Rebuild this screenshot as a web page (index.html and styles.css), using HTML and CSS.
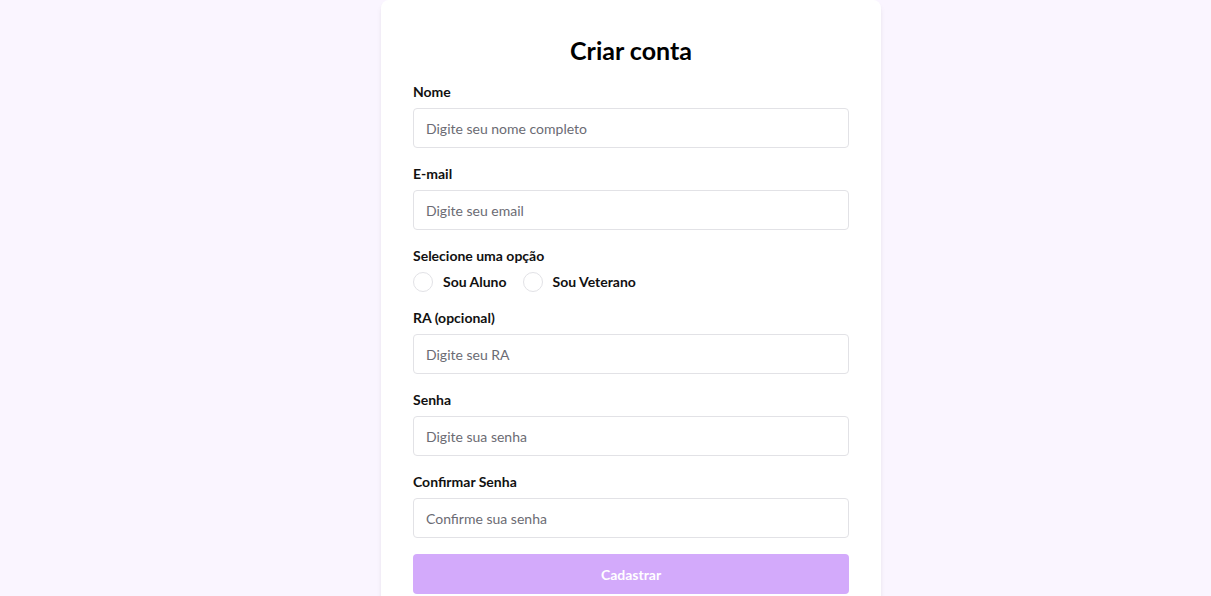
FILE: index.html
```html
<!DOCTYPE html>
<html lang="pt-BR">
<head>
<meta charset="utf-8">
<title>Criar conta</title>
<link rel="stylesheet" href="styles.css">
</head>
<body>
<div class="page">
  <form class="card">
    <h1 class="title">Criar conta</h1>
    <div class="field">
      <label class="label">Nome</label>
      <input class="input" type="text" placeholder="Digite seu nome completo">
    </div>
    <div class="field">
      <label class="label">E-mail</label>
      <input class="input" type="email" placeholder="Digite seu email">
    </div>
    <div class="field">
      <span class="label">Selecione uma opção</span>
      <div class="radios">
        <label class="radio"><input type="radio" name="tipo"><span>Sou Aluno</span></label>
        <label class="radio"><input type="radio" name="tipo"><span>Sou Veterano</span></label>
      </div>
    </div>
    <div class="field">
      <label class="label">RA (opcional)</label>
      <input class="input" type="text" placeholder="Digite seu RA">
    </div>
    <div class="field">
      <label class="label">Senha</label>
      <input class="input" type="password" placeholder="Digite sua senha">
    </div>
    <div class="field">
      <label class="label">Confirmar Senha</label>
      <input class="input" type="password" placeholder="Confirme sua senha">
    </div>
    <button class="submit" type="button" disabled>Cadastrar</button>
  </form>
</div>
</body>
</html>
```

FILE: styles.css
```css
* { box-sizing: border-box; }
html, body { margin: 0; padding: 0; }
body {
  background: #faf5ff;
  font-family: Lato, "Noto Sans", sans-serif;
  color: #111;
}
.page {
  display: flex;
  justify-content: center;
  padding-left: 51px;
}
.card {
  width: 500px;
  background: #fff;
  border-radius: 8px;
  padding: 34px 32px 32px;
  box-shadow: 0 4px 6px -1px rgba(0,0,0,0.08), 0 2px 4px -2px rgba(0,0,0,0.08);
}
.title {
  margin: 0 0 16px;
  font-size: 25px;
  line-height: 32px;
  font-weight: 700;
  text-align: center;
  color: #000;
}
.field {
  display: flex;
  flex-direction: column;
  margin-bottom: 16px;
}
.label {
  font-size: 14px;
  line-height: 20px;
  font-weight: 700;
  margin-bottom: 6px;
  color: #111;
}
.input {
  height: 40px;
  border: 1px solid #e2e2e6;
  border-radius: 4px;
  padding: 0 12px;
  font-family: inherit;
  font-size: 14px;
  color: #111;
  outline: none;
}
.input::placeholder { color: #6b6b73; }
.radios {
  display: flex;
  gap: 16px;
  height: 20px;
  align-items: center;
}
.radio {
  display: flex;
  align-items: center;
  gap: 10px;
  font-size: 14px;
  line-height: 18px;
  font-weight: 700;
}
.radio input {
  appearance: none;
  -webkit-appearance: none;
  margin: 0;
  width: 20px;
  height: 20px;
  border: 1px solid #e2e2e6;
  border-radius: 50%;
  background: #fff;
}
.submit {
  display: block;
  width: 100%;
  height: 40px;
  border: none;
  border-radius: 4px;
  background: #d3aafb;
  color: #fff;
  font-family: inherit;
  font-size: 14px;
  font-weight: 700;
}
```
